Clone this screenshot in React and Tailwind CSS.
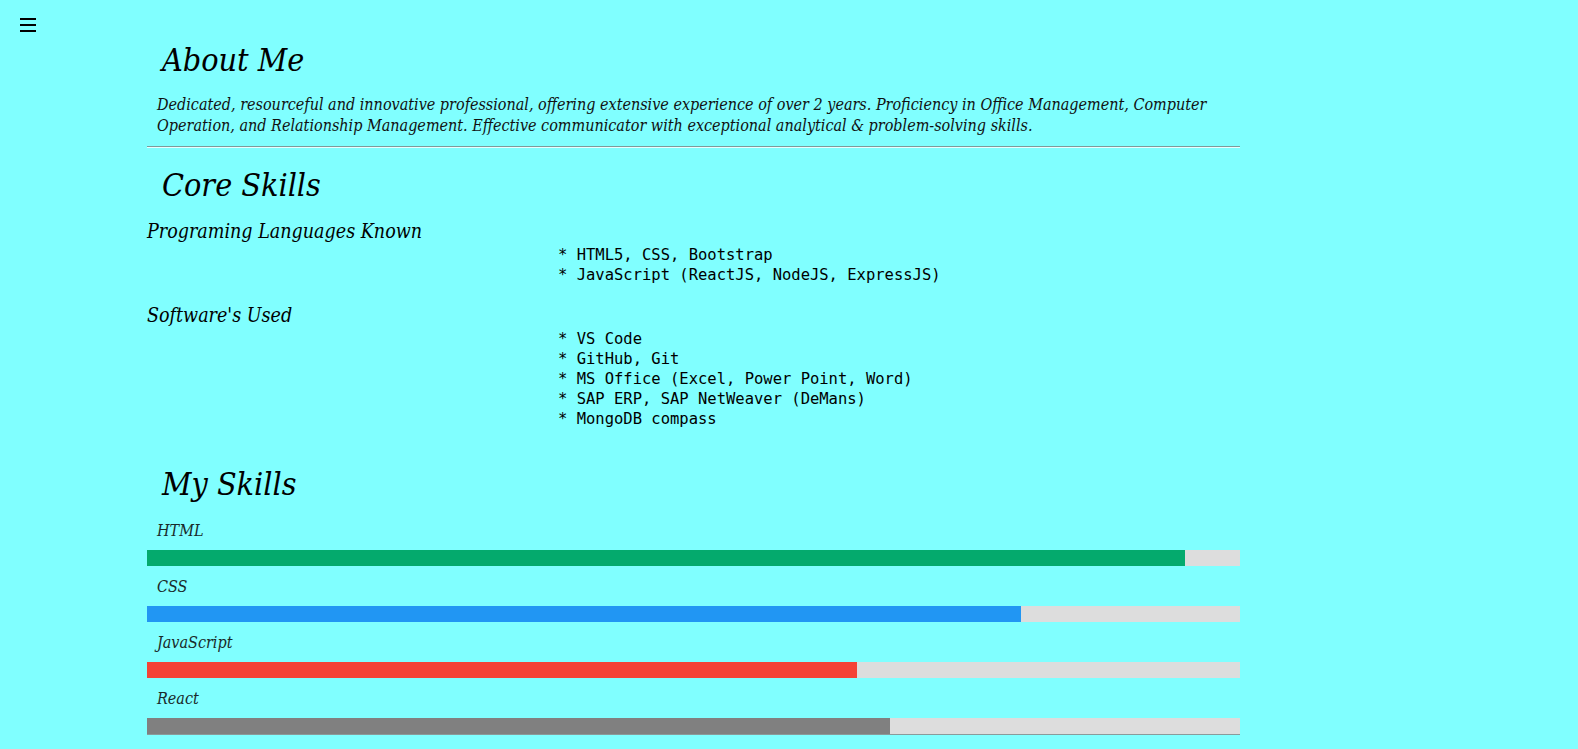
const skills = [
  { name: "HTML", pct: 95, color: "bg-[#04aa6d]" },
  { name: "CSS", pct: 80, color: "bg-[#2196f3]" },
  { name: "JavaScript", pct: 65, color: "bg-[#f44336]" },
  { name: "React", pct: 68, color: "bg-[#808080]" },
];

const langs = ["HTML5, CSS, Bootstrap", "JavaScript (ReactJS, NodeJS, ExpressJS)"];
const software = [
  "VS Code",
  "GitHub, Git",
  "MS Office (Excel, Power Point, Word)",
  "SAP ERP, SAP NetWeaver (DeMans)",
  "MongoDB compass",
];

const serif = "font-['DejaVu_Serif_Condensed','DejaVu_Serif',serif] italic";

function Heading({ children }) {
  return (
    <h2 className={`${serif} text-[32px] leading-[44px] pl-[15px] font-normal text-black`}>
      {children}
    </h2>
  );
}

function List({ items }) {
  return (
    <pre className="font-['DejaVu_Sans_Mono',monospace] text-[15.5px] leading-[20px] pl-[411px] pt-[1px] text-black">
      {items.map((t) => `* ${t}`).join("\n")}
    </pre>
  );
}

export default function App() {
  return (
    <div className="min-h-screen bg-[#80ffff] text-black relative">
      <button className="absolute left-[20px] top-[18px] w-[16px] h-[14px] flex flex-col justify-between">
        <span className="block h-[2px] bg-black" />
        <span className="block h-[2px] bg-black" />
        <span className="block h-[2px] bg-black" />
      </button>

      <div className="ml-[147px] w-[1093px] pt-[38px]">
        <Heading>About Me</Heading>
        <p className={`${serif} text-[16px] leading-[21px] px-[10px] mt-[12px] text-[#111]`}>
          Dedicated, resourceful and innovative professional, offering extensive experience of over 2 years.
          Proficiency in Office Management, Computer Operation, and Relationship Management. Effective
          communicator with exceptional analytical &amp; problem-solving skills.
        </p>
        <hr className="mt-[10px] border-t border-t-[#7f9a9a] border-b border-b-[#e8ffff]" />

        <div className="mt-[15px]">
          <Heading>Core Skills</Heading>
        </div>
        <h4 className={`${serif} text-[19.5px] leading-[24px] mt-[13px]`}>Programing Languages Known</h4>
        <List items={langs} />
        <h4 className={`${serif} text-[19.5px] leading-[24px] mt-[19px]`}>Software's Used</h4>
        <List items={software} />

        <div className="mt-[33px]">
          <Heading>My Skills</Heading>
        </div>
        <div className="mt-[11px]">
          {skills.map((s, i) => (
            <div key={s.name} className={i > 0 ? "mt-[7px]" : ""}>
              <p className={`${serif} text-[16px] leading-[24px] pt-[2px] h-[24px] px-[10px] text-[#1a2a2a]`}>
                {s.name}
              </p>
              <div className="mt-[9px] h-[16px] bg-[#dddddd]">
                <div className={`h-full ${s.color}`} style={{ width: `${s.pct}%` }} />
              </div>
            </div>
          ))}
        </div>
        <hr className="border-t border-t-[#8a9a9a]" />
      </div>
    </div>
  );
}
